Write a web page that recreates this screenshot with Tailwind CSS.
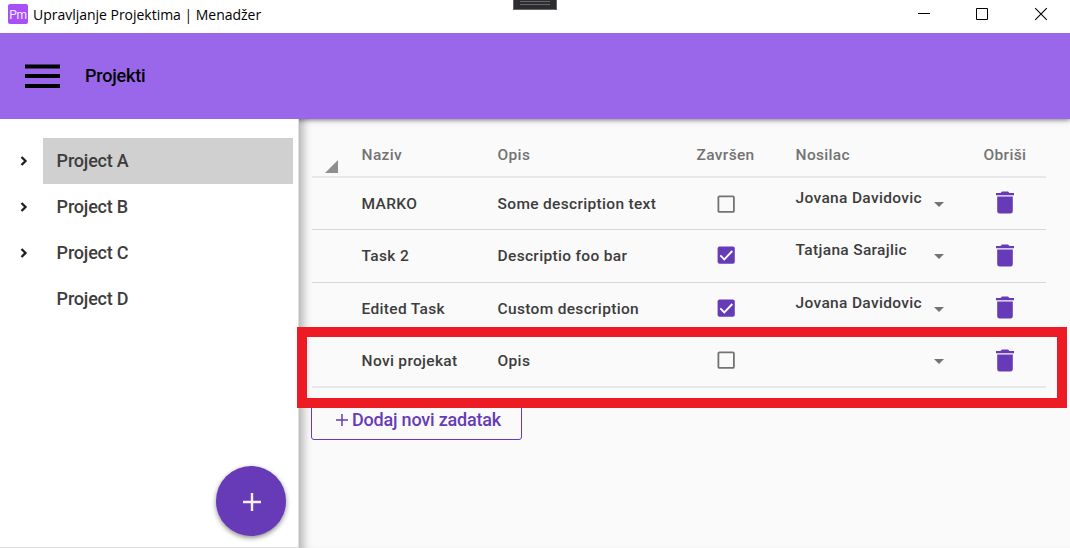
<!DOCTYPE html>
<html lang="sr-Latn">
<head>
<meta charset="utf-8">
<title>Upravljanje Projektima | Menadžer</title>
<script src="https://cdn.jsdelivr.net/npm/@tailwindcss/browser@4"></script>
</head>
<body class="relative flex h-[548px] w-[1070px] flex-col overflow-hidden bg-[#fafafa] font-['Roboto',sans-serif] font-medium text-[#3d3d3d]">
<svg class="hidden">
  <symbol id="trash" viewBox="0 0 18 23"><path fill="#673ab7" d="M0 2h4.500L6 .6h6L13.500 2H18v2.300H0zM1.200 5.500h15.600v14.700a2.400 2.400 0 0 1-2.400 2.400H3.600a2.400 2.400 0 0 1-2.400-2.400z"/></symbol>
  <symbol id="caret" viewBox="0 0 10 5"><path fill="#737373" d="M0 0h10L5 5z"/></symbol>
  <symbol id="off" viewBox="0 0 18 18"><rect x="1.400" y="1.400" width="15.500" height="15.500" rx="1" fill="none" stroke="#737373" stroke-width="1.800"/></symbol>
  <symbol id="on" viewBox="0 0 18 18"><rect x=".6" y=".6" width="17.200" height="17.200" rx="2" fill="#673ab7"/><path d="M3.300 9.300l4 4 8-8.300" fill="none" stroke="#fff" stroke-width="1.900"/></symbol>
  <symbol id="chev" viewBox="0 0 8 10"><path d="M1.500 1L5.500 5 1.500 9" fill="none" stroke="#1f1f1f" stroke-width="2.300"/></symbol>
</svg>

<header class="relative z-30 flex h-[33px] shrink-0 items-start bg-white pl-2 text-black">
  <div class="mt-1 flex h-5 w-5 items-center justify-center rounded-[2px] bg-[#a84ff8] pt-px text-[12px] font-normal tracking-[-0.2px] text-white/90">Pm</div>
  <div class="ml-[5px] mt-[5px] font-['Open_Sans',sans-serif] text-[14px] leading-5 font-normal tracking-[-0.02px] whitespace-nowrap">Upravljanje Projektima | Menadžer</div>
  <svg class="ml-auto mr-[22px] h-7 w-[130px]" viewBox="0 0 130 28" fill="none" stroke="#000"><path d="M0 13.500h12"/><path d="M58.500 8.500h11v11h-11z"/><path d="M117.200 8.200l11.600 11.600M128.800 8.200L117.200 19.800" stroke-width="1.100"/></svg>
</header>
<div class="absolute top-0 left-[513px] z-30 flex h-[10px] w-11 flex-col gap-[2px] border border-t-0 border-[#66666a] bg-[#2d2d30] px-[6px] pt-px">
  <i class="h-px bg-[#68686c]"></i><i class="h-px bg-[#68686c]"></i>
</div>

<nav class="relative z-20 flex h-[86px] shrink-0 items-center bg-[#9a67ea] pl-[25px] text-black shadow-[0_1px_5px_rgba(0,0,0,0.5)]">
  <svg class="h-6 w-[35px]" viewBox="0 0 35 24"><path d="M0 .5h35v4H0zM0 10h35v4H0zM0 20h35v4H0z"/></svg>
  <span class="ml-[25px] text-[18px] leading-6 tracking-[-0.2px]">Projekti</span>
</nav>

<div class="flex min-h-0 flex-1">
  <aside class="relative z-20 flex w-[299px] shrink-0 flex-col border-r border-b border-[#dedede] bg-white pt-[19px] text-[18px] tracking-[-0.2px]">
    <div class="flex h-[46px] items-center"><svg class="ml-5 mr-[14.6px] h-[10px] w-2"><use href="#chev"/></svg><span class="flex h-full w-[250px] items-center bg-[#d0d0d0] pb-[2px] pl-[14px]">Project A</span></div>
    <div class="flex h-[46px] items-center"><svg class="ml-5 mr-[14.6px] h-[10px] w-2"><use href="#chev"/></svg><span class="pb-[2px] pl-[14px]">Project B</span></div>
    <div class="flex h-[46px] items-center"><svg class="ml-5 mr-[14.6px] h-[10px] w-2"><use href="#chev"/></svg><span class="pb-[2px] pl-[14px]">Project C</span></div>
    <div class="flex h-[46px] items-center pb-[2px] pl-[56.6px]">Project D</div>
    <button class="mt-auto mr-3 mb-[11px] flex h-[70px] w-[70px] items-center justify-center self-end rounded-full bg-[#673ab7] shadow-[0_2px_5px_rgba(0,0,0,0.45)]"><svg class="mt-px ml-px h-[18px] w-[18px]" viewBox="0 0 18 18"><path d="M7.800 0h2.400v7.800H18v2.400h-7.800V18H7.800v-7.800H0V7.800h7.800z" fill="#f5f0fc"/></svg></button>
  </aside>

  <main class="flex flex-1 flex-col items-start pl-[12.6px] text-[15.5px] leading-5 tracking-[0.32px] shadow-[inset_11px_0_10px_-7px_rgba(0,0,0,0.3)]">
    <div class="grid h-[59px] w-[734px] grid-cols-[50px_136px_199px_99px_188px_62px] items-center border-b-2 border-[#e8e8e8] text-[#737373]">
      <svg class="ml-[13px] mt-[41px] h-[13px] w-[13px] self-start" viewBox="0 0 13 13"><path fill="#8f8f8f" d="M13 0v13H0z"/></svg>
      <span class="mt-[14px]">Naziv</span><span class="mt-[14px]">Opis</span><span class="mt-[14px]">Završen</span><span class="mt-[14px]">Nosilac</span><span class="mt-[14px]">Obriši</span>
    </div>
    <div class="grid h-[52px] w-[734px] grid-cols-[50px_136px_219px_79px_138px_50px_62px] items-center border-b border-[#d8d8d8]">
      <i></i><span>MARKO</span><span>Some description text</span><svg class="h-[18px] w-[18px]"><use href="#off"/></svg><span class="mb-3 whitespace-nowrap">Jovana Davidovic</span><svg class="mt-[2px] h-[5px] w-[10px]"><use href="#caret"/></svg><svg class="ml-3 mb-[2px] h-[23px] w-[18px]"><use href="#trash"/></svg>
    </div>
    <div class="grid h-[53px] w-[734px] grid-cols-[50px_136px_219px_79px_138px_50px_62px] items-center border-b border-[#d8d8d8]">
      <i></i><span>Task 2</span><span>Descriptio foo bar</span><svg class="mb-[2px] h-[18px] w-[18px]"><use href="#on"/></svg><span class="mb-3 whitespace-nowrap">Tatjana Sarajlic</span><svg class="h-[5px] w-[10px]"><use href="#caret"/></svg><svg class="ml-3 mb-px h-[23px] w-[18px]"><use href="#trash"/></svg>
    </div>
    <div class="grid h-[52px] w-[734px] grid-cols-[50px_136px_219px_79px_138px_50px_62px] items-center border-b border-[#d8d8d8]">
      <i></i><span>Edited Task</span><span>Custom description</span><svg class="mb-px h-[18px] w-[18px]"><use href="#on"/></svg><span class="mb-3 whitespace-nowrap">Jovana Davidovic</span><svg class="mt-[2px] h-[5px] w-[10px]"><use href="#caret"/></svg><svg class="ml-3 mb-[2px] h-[23px] w-[18px]"><use href="#trash"/></svg>
    </div>
    <div class="grid h-[53px] w-[734px] grid-cols-[50px_136px_219px_79px_138px_50px_62px] items-center border-b-2 border-[#e8e8e8]">
      <i></i><span>Novi projekat</span><span>Opis</span><svg class="mb-px h-[18px] w-[18px]"><use href="#off"/></svg><i></i><svg class="mt-[2px] h-[5px] w-[10px]"><use href="#caret"/></svg><svg class="ml-3 h-[23px] w-[18px]"><use href="#trash"/></svg>
    </div>
    <button class="mt-3 -ml-[0.6px] flex h-10 w-[211px] items-center rounded-[3px] border border-[#673ab7] pl-[24px] text-[18px] tracking-[-0.2px] text-[#673ab7]"><svg class="mr-1 h-3 w-3" viewBox="0 0 12 12"><path d="M6 0v12M0 6h12" stroke="#673ab7" stroke-width="1.500"/></svg>Dodaj novi zadatak</button>
  </main>
</div>
<div class="absolute top-[327px] left-[297px] z-30 h-[81px] w-[770px] border-[10px] border-[#ed1c24]"></div>
</body>
</html>
